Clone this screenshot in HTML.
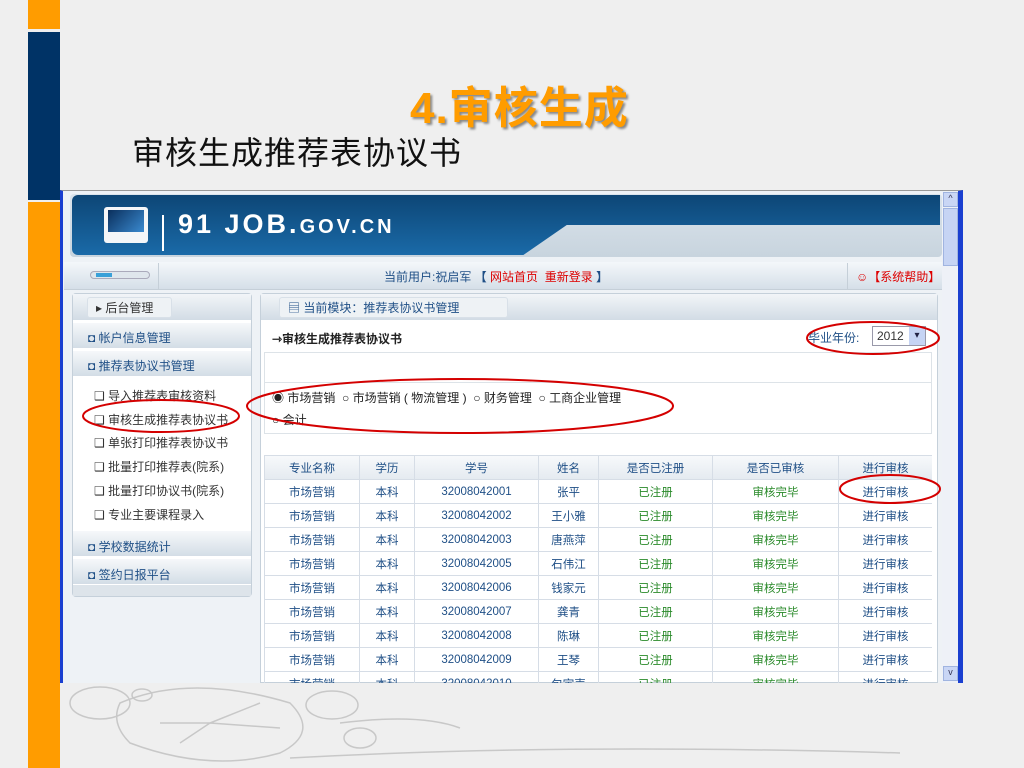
<!DOCTYPE html>
<html><head><meta charset="utf-8"><style>
*{margin:0;padding:0;box-sizing:border-box}
body{width:1024px;height:768px;background:#efefef;position:relative;overflow:hidden;font-family:"Liberation Sans","Noto Sans CJK SC",sans-serif}
.a{position:absolute}
.t{font-size:12px;color:#333;white-space:nowrap}
table{border-collapse:collapse;font-size:11.5px}
td{border:1px solid #d6dde6;height:24px;text-align:center;color:#1f4f86}
.g{color:#2a8a2a}
</style></head><body>
<div class="a" style="left:28px;top:0;width:32px;height:29px;background:#ff9c00"></div>
<div class="a" style="left:28px;top:32px;width:32px;height:168px;background:#003366"></div>
<div class="a" style="left:28px;top:202px;width:32px;height:566px;background:#ff9c00"></div>
<div class="a" style="left:410px;top:72px;font-size:44px;font-weight:bold;color:#ff9c00;text-shadow:2px 2px 2px #888;letter-spacing:1px">4.审核生成</div>
<div class="a" style="left:132px;top:128px;font-size:32px;color:#111;letter-spacing:1px">审核生成推荐表协议书</div>

<svg class="a" style="left:60px;top:683px" width="900" height="85"><g fill="none" stroke="#c8c8c8" stroke-width="1.5">
<ellipse cx="40" cy="20" rx="30" ry="16"/><ellipse cx="82" cy="12" rx="10" ry="6"/><path d="M60 20 Q130 -10 230 20 Q260 50 220 70 Q150 90 70 60 Q50 40 60 20Z"/><ellipse cx="272" cy="22" rx="26" ry="14"/><ellipse cx="300" cy="55" rx="16" ry="10"/><path d="M280 40 Q360 30 400 45M230 75 Q500 60 840 70"/><path d="M150 40 L200 20 M150 40 L220 45 M150 40 L120 60 M150 40 L100 40"/></g></svg>

<div class="a" style="left:60px;top:190px;width:903px;height:493px;background:#eef2f6;border-left:3px solid #1a3fd0;border-right:5px solid #1a3fd0;border-top:1px solid #999"></div>
<div class="a" style="left:942px;top:192px;width:16px;height:491px;background:#eef1f7"></div>
<div class="a" style="left:943px;top:192px;width:15px;height:15px;background:#c9d6f5;border:1px solid #a0b4e0;font-size:9px;text-align:center;color:#335">^</div>
<div class="a" style="left:943px;top:208px;width:15px;height:58px;background:#c6d4f4;border:1px solid #a0b4e0"></div>
<div class="a" style="left:943px;top:666px;width:15px;height:15px;background:#c9d6f5;border:1px solid #a0b4e0;font-size:9px;text-align:center;color:#335">v</div>

<div class="a" style="left:70px;top:194px;width:872px;height:63px;background:linear-gradient(#dbe4ec,#c8d4de);border-radius:4px"></div>
<div class="a" style="left:72px;top:195px;width:868px;height:60px;background:linear-gradient(#0d4676,#1a6aa8);border-radius:6px 0 0 6px;clip-path:polygon(0 0,100% 0,100% 50%,57% 50%,52% 100%,0 100%)"></div>
<div class="a" style="left:104px;top:207px;width:44px;height:36px;background:#f4f6f8;border-radius:3px"></div>
<div class="a" style="left:108px;top:210px;width:36px;height:22px;background:linear-gradient(135deg,#0a2f5c,#3a8ad0)"></div>
<div class="a" style="left:162px;top:215px;width:2px;height:36px;background:#fff"></div>
<div class="a" style="left:178px;top:209px;font-size:27px;font-weight:bold;color:#fff;letter-spacing:3px">91 JOB.<span style="font-size:20px">GOV.CN</span></div>

<div class="a" style="left:64px;top:262px;width:878px;height:28px;background:linear-gradient(#f4f7fa,#d5dfe8);border-bottom:1px solid #c5cfd8"></div>
<div class="a" style="left:158px;top:263px;width:1px;height:26px;background:#c5cfd8"></div>
<div class="a" style="left:847px;top:263px;width:1px;height:26px;background:#c5cfd8"></div>
<div class="a" style="left:90px;top:271px;width:60px;height:8px;border-radius:4px;background:#dfe6ec;border:1px solid #aab"></div>
<div class="a" style="left:96px;top:273px;width:16px;height:4px;background:#3aa0d8"></div>
<div class="a t" style="left:384px;top:268px;color:#1f4f86">当前用户:祝启军 <b>【</b> <span style="color:#d00">网站首页</span> &nbsp;<span style="color:#d00">重新登录</span> <b>】</b></div>
<div class="a t" style="left:856px;top:268px;color:#d00">☺【系统帮助】</div>

<div class="a" style="left:72px;top:293px;width:180px;height:304px;background:#fff;border:1px solid #c5d0da;border-radius:4px"></div>
<div class="a" style="left:73px;top:294px;width:178px;height:26px;background:linear-gradient(#f2f5f8,#d2dce5)"></div>
<div class="a t" style="left:87px;top:297px;border:1px solid #d8e0e8;background:#eef2f5;padding:1px 18px 1px 8px;border-radius:3px">▸ 后台管理</div>
<div class="a" style="left:73px;top:323px;width:178px;height:25px;background:linear-gradient(#f6f8fa,#d3dde6)"></div>
<div class="a t" style="left:88px;top:329px;color:#1f4f86">◘ 帐户信息管理</div>
<div class="a" style="left:73px;top:351px;width:178px;height:25px;background:linear-gradient(#f6f8fa,#d3dde6)"></div>
<div class="a t" style="left:88px;top:357px;color:#1f4f86">◘ 推荐表协议书管理</div>
<div class="a t" style="left:94px;top:385px;line-height:23.7px">❑ 导入推荐表审核资料<br>❑ 审核生成推荐表协议书<br>❑ 单张打印推荐表协议书<br>❑ 批量打印推荐表(院系)<br>❑ 批量打印协议书(院系)<br>❑ 专业主要课程录入</div>
<div class="a" style="left:73px;top:531px;width:178px;height:25px;background:linear-gradient(#f6f8fa,#d3dde6)"></div>
<div class="a t" style="left:88px;top:538px;color:#1f4f86">◘ 学校数据统计</div>
<div class="a" style="left:73px;top:559px;width:178px;height:25px;background:linear-gradient(#f6f8fa,#d3dde6)"></div>
<div class="a t" style="left:88px;top:566px;color:#1f4f86">◘ 签约日报平台</div>
<div class="a" style="left:73px;top:585px;width:178px;height:11px;background:#dde4ea"></div>

<div class="a" style="left:260px;top:293px;width:678px;height:390px;background:#fff;border:1px solid #c5d0da;border-radius:4px 4px 0 0"></div>
<div class="a" style="left:261px;top:294px;width:676px;height:26px;background:linear-gradient(#f2f5f8,#d2dce5)"></div>
<div class="a t" style="left:279px;top:297px;border:1px solid #d8e0e8;background:#eef2f5;padding:1px 48px 1px 8px;border-radius:3px;color:#1f4f86">▤ 当前模块：推荐表协议书管理</div>
<div class="a t" style="left:272px;top:330px;font-weight:bold;color:#222">⇾审核生成推荐表协议书</div>
<div class="a t" style="left:808px;top:329px;color:#1f4f86">毕业年份:</div>
<div class="a" style="left:872px;top:326px;width:54px;height:20px;border:1px solid #99a;background:#fff;font-size:12px;padding:2px 4px;color:#333">2012</div>
<div class="a" style="left:909px;top:327px;width:16px;height:18px;background:#c6d4f4;font-size:10px;text-align:center;color:#224;line-height:18px">▾</div>
<div class="a" style="left:264px;top:352px;width:668px;height:30px;border:1px solid #dde3e8;border-bottom:none"></div>
<div class="a" style="left:264px;top:382px;width:668px;height:52px;border:1px solid #dde3e8"></div>
<div class="a t" style="left:272px;top:387px;line-height:22px;color:#222">◉ 市场营销 &nbsp;○ 市场营销 ( 物流管理 ) &nbsp;○ 财务管理 &nbsp;○ 工商企业管理<br>○ 会计</div>

<div class="a" style="left:264px;top:455px;width:668px;height:228px;overflow:hidden">
<table style="width:669px"><tr style="background:linear-gradient(#f7f9fb,#e4eaf0)"><td style="width:95px">专业名称</td><td style="width:55px">学历</td><td style="width:124px">学号</td><td style="width:60px">姓名</td><td style="width:114px">是否已注册</td><td style="width:126px">是否已审核</td><td>进行审核</td></tr>
<tr><td>市场营销</td><td>本科</td><td>32008042001</td><td>张平</td><td class="g">已注册</td><td class="g">审核完毕</td><td>进行审核</td></tr>
<tr><td>市场营销</td><td>本科</td><td>32008042002</td><td>王小雅</td><td class="g">已注册</td><td class="g">审核完毕</td><td>进行审核</td></tr>
<tr><td>市场营销</td><td>本科</td><td>32008042003</td><td>唐燕萍</td><td class="g">已注册</td><td class="g">审核完毕</td><td>进行审核</td></tr>
<tr><td>市场营销</td><td>本科</td><td>32008042005</td><td>石伟江</td><td class="g">已注册</td><td class="g">审核完毕</td><td>进行审核</td></tr>
<tr><td>市场营销</td><td>本科</td><td>32008042006</td><td>钱家元</td><td class="g">已注册</td><td class="g">审核完毕</td><td>进行审核</td></tr>
<tr><td>市场营销</td><td>本科</td><td>32008042007</td><td>龚青</td><td class="g">已注册</td><td class="g">审核完毕</td><td>进行审核</td></tr>
<tr><td>市场营销</td><td>本科</td><td>32008042008</td><td>陈琳</td><td class="g">已注册</td><td class="g">审核完毕</td><td>进行审核</td></tr>
<tr><td>市场营销</td><td>本科</td><td>32008042009</td><td>王琴</td><td class="g">已注册</td><td class="g">审核完毕</td><td>进行审核</td></tr>
<tr><td>市场营销</td><td>本科</td><td>32008042010</td><td>包宇声</td><td class="g">已注册</td><td class="g">审核完毕</td><td>进行审核</td></tr>
</table></div>

<svg class="a" style="left:0;top:0" width="1024" height="768"><g fill="none" stroke="#d40000" stroke-width="2">
<ellipse cx="873" cy="338" rx="66" ry="16"/>
<ellipse cx="460" cy="406" rx="213" ry="27"/>
<ellipse cx="161" cy="416" rx="78" ry="16"/>
<ellipse cx="890" cy="489" rx="50" ry="14"/>
</g></svg>
</body></html>
